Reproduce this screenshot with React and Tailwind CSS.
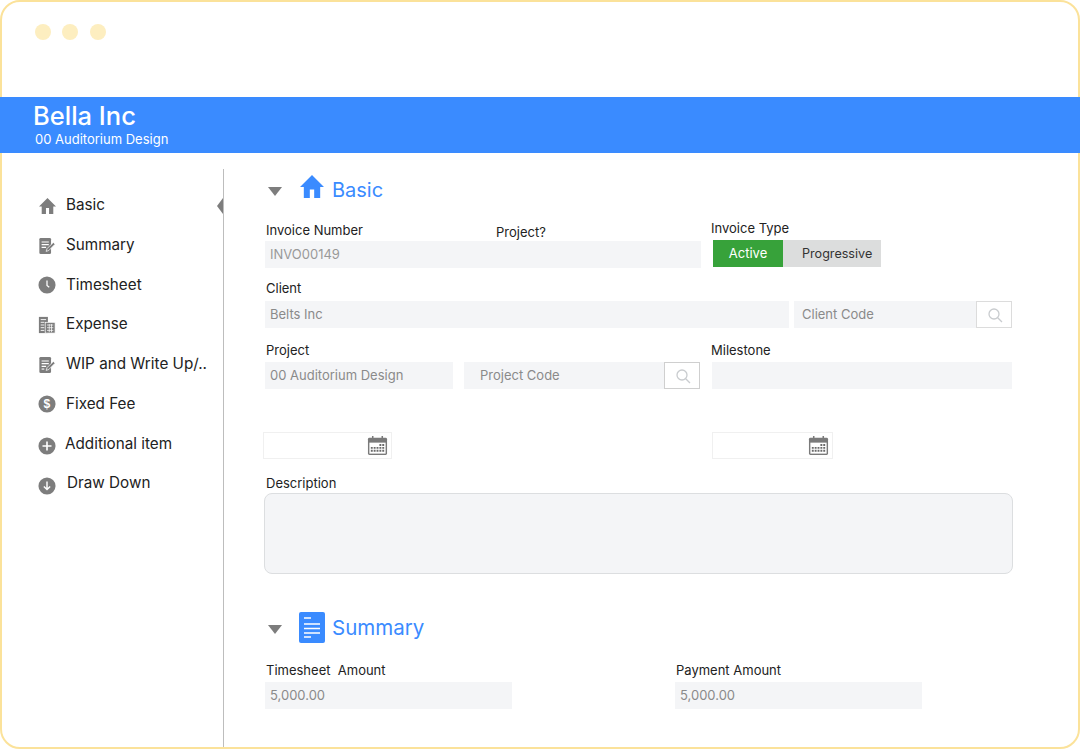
const F = "font-['Inter','Noto_Sans',sans-serif]";

function HomeIcon({ className }) {
  return (
    <svg viewBox="1 2 22 19" preserveAspectRatio="none" className={className} fill="currentColor">
      <path d="M10 21v-7h4v7h5.5v-9H23L12 2 1 12h3.5v9z" />
    </svg>
  );
}

function NoteIcon({ lines = 3 }) {
  return (
    <svg viewBox="0 0 20 20" className="w-[18px] h-[18px]">
      <rect x="1.5" y="1" width="13" height="18" rx="1.5" fill="#7d7d7d" />
      <path d="M4 5.5h8M4 8.5h8M4 11.5h5" stroke="#fff" strokeWidth="1.2" />
      {lines > 3 && <path d="M4 14.5h3" stroke="#fff" strokeWidth="1.2" />}
      <path d="M9 16l1-3 7-7 2 2-7 7z" fill="#7d7d7d" stroke="#fff" strokeWidth="0.8" />
    </svg>
  );
}

function Circle({ children }) {
  return (
    <svg viewBox="0 0 20 20" className="w-[18px] h-[18px]">
      <circle cx="10" cy="10" r="9.5" fill="#7d7d7d" />
      {children}
    </svg>
  );
}

function ExpenseIcon() {
  return (
    <svg viewBox="0 0 20 20" className="w-[18px] h-[18px]">
      <rect x="1" y="1" width="10" height="18" fill="#7d7d7d" />
      <rect x="8" y="7" width="11" height="12" fill="#7d7d7d" stroke="#fff" strokeWidth="0.8" />
      <path d="M3 4h6M3 7h4M3 10h4M3 13h4M3 16h4" stroke="#fff" strokeWidth="1" />
      <path d="M10 10h7M10 13h7M10 16h7M12.5 9v9M15 9v9" stroke="#fff" strokeWidth="0.8" />
    </svg>
  );
}

const navItems = [
  { label: "Basic", icon: <HomeIcon className="w-[17px] h-[16px] text-[#7d7d7d]" />, cls: "ml-[10px]" },
  { label: "Summary", icon: <NoteIcon />, cls: "ml-[10px]" },
  {
    label: "Timesheet",
    icon: (
      <Circle>
        <path d="M10 5v5.5l2.5 2" stroke="#fff" strokeWidth="1.4" fill="none" />
      </Circle>
    ),
    cls: "ml-[10px]",
  },
  { label: "Expense", icon: <ExpenseIcon />, cls: "ml-[10px]" },
  { label: "WIP and Write Up/..", icon: <NoteIcon lines={4} />, cls: "ml-[10px]" },
  {
    label: "Fixed Fee",
    icon: (
      <Circle>
        <text x="10" y="14.8" textAnchor="middle" fontSize="13.5" fontWeight="700" fill="#fff" fontFamily="Liberation Sans">
          $
        </text>
      </Circle>
    ),
    cls: "ml-[10px]",
  },
  {
    label: "Additional item",
    icon: (
      <Circle>
        <path d="M5 10h10M10 5v10" stroke="#fff" strokeWidth="1.8" />
      </Circle>
    ),
    cls: "ml-[9px]",
    iconCls: "translate-y-0.5",
  },
  {
    label: "Draw Down",
    icon: (
      <Circle>
        <path d="M10 5v9M6.5 10.5L10 14l3.5-3.5" stroke="#fff" strokeWidth="1.6" fill="none" />
      </Circle>
    ),
    cls: "ml-[11px]",
    iconCls: "translate-y-0.5",
  },
];

function Triangle() {
  return <div className="w-0 h-0 border-x-[7px] border-x-transparent border-t-[9px] border-t-[#7d7d7d]" />;
}

function Label({ children, className = "" }) {
  return <div className={`text-[13px] leading-[16px] text-[#222] whitespace-pre ${className}`}>{children}</div>;
}

function Input({ children, className = "" }) {
  return (
    <div className={`h-[27px] bg-[#f4f5f7] flex items-center text-[13px] text-[#8a8a8a] whitespace-pre ${className}`}>
      {children}
    </div>
  );
}

function SearchBtn({ className = "border-[#dcdcdc]" }) {
  return (
    <div className={`w-[36px] h-[27px] border bg-white flex items-center justify-center pl-px pt-px ${className}`}>
      <svg viewBox="0 0 16 16" className="w-[16px] h-[16px]" fill="none" stroke="#c9cccf" strokeWidth="1.3">
        <circle cx="7" cy="7" r="5" />
        <path d="M10.7 10.7L15 15" />
      </svg>
    </div>
  );
}

function CalendarIcon() {
  return (
    <svg viewBox="0 0 22 22" className="w-[21px] h-[21px]">
      <rect x="1" y="3" width="20" height="18" rx="1.5" fill="#7a7a7a" />
      <rect x="2.5" y="8" width="17" height="11.5" fill="#fff" />
      <path d="M6 1v4M16 1v4" stroke="#7a7a7a" strokeWidth="1.6" />
      <path
        d="M13 9.5h2v2h-2zM16 9.5h2v2h-2zM4 12.5h2v2H4zM7 12.5h2v2H7zM10 12.5h2v2h-2zM13 12.5h2v2h-2zM16 12.5h2v2h-2zM4 15.5h2v2H4zM7 15.5h2v2H7zM10 15.5h2v2h-2zM13 15.5h2v2h-2zM16 15.5h2v2h-2z"
        fill="#6a6a6a"
      />
    </svg>
  );
}

function DateInput({ className = "" }) {
  return (
    <div className={`h-[27px] border border-[#f0f0f0] bg-white flex items-center justify-end pr-[3px] ${className}`}>
      <CalendarIcon />
    </div>
  );
}

export default function App() {
  return (
    <div className={`${F} w-[1080px] h-[749px] bg-white border-2 border-[#fbe29a] rounded-[20px] flex flex-col`}>
      <div className="h-[95px] shrink-0 flex gap-[11.3px] pl-[33px] pt-[22px]">
        <div className="w-4 h-4 rounded-full bg-[#fdeec0]" />
        <div className="w-4 h-4 rounded-full bg-[#fdeec0]" />
        <div className="w-4 h-4 rounded-full bg-[#fdeec0]" />
      </div>

      <div className="h-[56px] shrink-0 bg-[#3a8bff] text-white -mx-0.5 pl-[34px] pt-[4px]">
        <div className="text-[25.5px] leading-[30px] font-medium -ml-px">Bella Inc</div>
        <div className="text-[13px] leading-[16px] pl-[1px]">00 Auditorium Design</div>
      </div>

      <div className="flex flex-1 min-h-0">
        <aside className="relative w-[222px] shrink-0 border-r border-[#bdbdbd] mt-[16px] pt-[17px] pl-[36px]">
          <div className="absolute right-0 top-[29px] w-0 h-0 border-y-[8px] border-y-transparent border-r-[6px] border-r-[#7d7d7d]" />
          {navItems.map((item) => (
            <div key={item.label} className="h-[39.7px] flex items-center">
              <div className={`w-[18px] h-[18px] flex items-center justify-center ${item.iconCls || ""}`}>{item.icon}</div>
              <span className={`text-[15.25px] text-[#222] whitespace-nowrap ${item.cls}`}>{item.label}</span>
            </div>
          ))}
        </aside>

        <main className="flex-1 pl-[41px] pt-[24px]">
          <div className="flex items-center h-[26px]">
            <div className="ml-[3px] mt-[2px]">
              <Triangle />
            </div>
            <HomeIcon className="w-[24px] h-[23px] text-[#3a8bff] ml-[18px] -mt-[7px]" />
            <span className="ml-[8px] text-[20px] text-[#3a8bff]">Basic</span>
          </div>

          <div className="flex mt-[16px]">
            <div className="w-[436px]">
              <div className="flex h-[22px]">
                <Label className="pt-[3px] pl-px">Invoice Number</Label>
                <Label className="ml-[133px] pt-[5px]">Project?</Label>
              </div>
              <Input className="pl-[5px] text-[13.6px] text-[#999]">INVO00149</Input>
            </div>
            <div className="ml-[10px] -mt-[2px]">
              <Label className="pt-[3px] h-[23px]">Invoice Type</Label>
              <div className="ml-[2px] w-[168px] h-[27px] flex bg-[#dcdddd]">
                <div className="w-[70px] bg-[#37a23a] text-white text-[13px] flex items-center justify-center pt-px">Active</div>
                <div className="flex-1 flex items-center pl-[19px] pt-px text-[12.6px] text-[#333]">Progressive</div>
              </div>
            </div>
          </div>

          <Label className="mt-[12px] h-[21px] pl-px">Client</Label>
          <div className="flex">
            <Input className="w-[524px] pl-[5px]">Belts Inc</Input>
            <Input className="ml-[5px] w-[182px] pl-[8px]">Client Code</Input>
            <SearchBtn />
          </div>

          <div className="flex mt-[13px]">
            <div>
              <Label className="h-[21px] pt-px pl-px">Project</Label>
              <div className="flex">
                <Input className="w-[188px] pl-[5px]">00 Auditorium Design</Input>
                <Input className="ml-[11px] w-[200px] pl-[16px]">Project Code</Input>
                <SearchBtn className="border-[#cfcfcf]" />
              </div>
            </div>
            <div className="ml-[11px]">
              <Label className="h-[21px] pt-px">Milestone</Label>
              <Input className="w-[300px] ml-px" />
            </div>
          </div>

          <div className="flex mt-[43px] -ml-[2px]">
            <DateInput className="w-[129px]" />
            <DateInput className="w-[121px] ml-[320px]" />
          </div>

          <Label className="mt-[16px] h-[18px] pl-px">Description</Label>
          <div className="w-[749px] h-[81px] -ml-px bg-[#f4f5f7] border border-[#dcdee0] rounded-[8px]" />

          <div className="flex items-center h-[32px] mt-[37px]">
            <div className="ml-[3px] mt-[5px]">
              <Triangle />
            </div>
            <svg viewBox="0 0 26 31" className="w-[26px] h-[31px] ml-[17px]">
              <rect width="26" height="31" rx="2" fill="#3a8bff" />
              <path d="M5 6h7M5 12h16M5 16.5h16M5 21h16M5 25h7" stroke="#fff" strokeWidth="1.4" />
            </svg>
            <span className="ml-[7px] mt-[2px] text-[20.5px] text-[#3a8bff]">Summary</span>
          </div>

          <div className="flex mt-[19px]">
            <div className="w-[247px]">
              <Label className="h-[20px] pl-px">{"Timesheet  Amount"}</Label>
              <Input className="pl-[5px] text-[13.4px]">5,000.00</Input>
            </div>
            <div className="w-[247px] ml-[163px]">
              <Label className="h-[20px] pl-px">Payment Amount</Label>
              <Input className="pl-[5px] text-[13.4px]">5,000.00</Input>
            </div>
          </div>
        </main>
      </div>
    </div>
  );
}
